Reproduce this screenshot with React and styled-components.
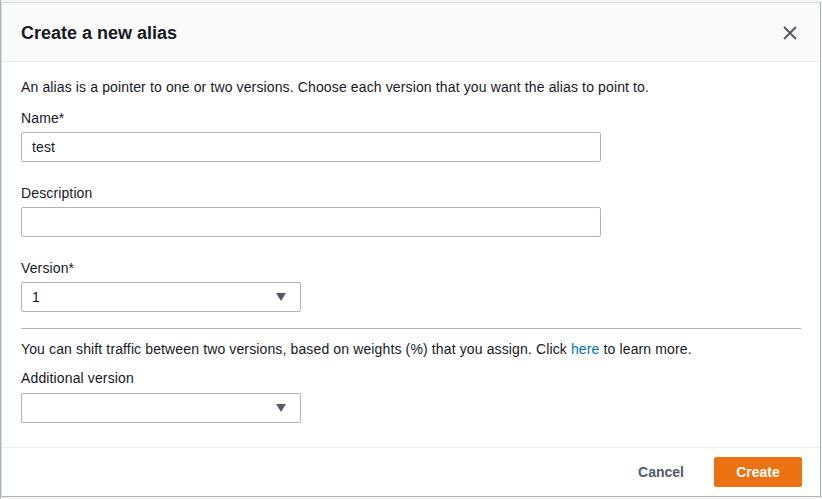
import React from "react";
import styled, { createGlobalStyle } from "styled-components";

const Global = createGlobalStyle`
  html, body { margin: 0; padding: 0; }
  body {
    background: #f2f3f3;
    font-family: "Liberation Sans", Arial, sans-serif;
    color: #16191f;
    width: 822px;
    height: 499px;
    overflow: hidden;
  }
`;

const Page = styled.div`
  padding: 2px 0 0 0;
  border-left: 1px solid #aab7b8;
  box-sizing: border-box;
  height: 499px;
  width: 822px;
`;

const Modal = styled.div`
  width: 820px;
  height: 495px;
  box-sizing: border-box;
  background: #fff;
  border: 1px solid #d5dbdb;
  border-right-color: #aab7b8;
  border-bottom-color: #aab7b8;
  display: flex;
  flex-direction: column;
`;

const Header = styled.div`
  height: 59px;
  box-sizing: border-box;
  background: #fafafa;
  border-bottom: 1px solid #eaeded;
  display: flex;
  align-items: center;
  justify-content: space-between;
  padding: 1px 20px 0 19px;
`;

const Title = styled.h2`
  margin: 0;
  font-size: 18px;
  font-weight: 700;
  line-height: 22px;
  color: #16191f;
`;

const CloseButton = styled.button`
  border: none;
  background: none;
  padding: 0;
  width: 20px;
  height: 20px;
  display: flex;
  align-items: center;
  justify-content: center;
  cursor: pointer;
`;

const Body = styled.div`
  flex: 1;
  padding: 14px 19px 0 19px;
  display: flex;
  flex-direction: column;
`;

const Text = styled.p`
  margin: 0;
  font-size: 14px;
  line-height: 22px;
  letter-spacing: 0.13px;
  color: #16191f;
`;

const Link = styled.a`
  color: #0073bb;
  text-decoration: none;
`;

const Field = styled.div`
  display: flex;
  flex-direction: column;
  margin-top: ${(p) => p.$top}px;
`;

const Label = styled.label`
  font-size: 14px;
  line-height: 22px;
  letter-spacing: 0.13px;
  color: #16191f;
  margin-bottom: ${(p) => p.$gap || 3}px;
`;

const Input = styled.input`
  box-sizing: border-box;
  width: ${(p) => p.$width}px;
  height: 30px;
  border: 1px solid #aab7b8;
  border-radius: 2px;
  padding: 0 10px;
  font-family: inherit;
  font-size: 14px;
  letter-spacing: 0.13px;
  color: #16191f;
  outline: none;
`;

const Select = styled.div`
  box-sizing: border-box;
  width: 280px;
  height: 30px;
  border: 1px solid #aab7b8;
  border-radius: 2px;
  padding: 0 14px 0 10px;
  display: flex;
  align-items: center;
  justify-content: space-between;
  font-size: 14px;
  color: #16191f;
`;

const Caret = styled.span`
  width: 0;
  height: 0;
  border-left: 5px solid transparent;
  border-right: 5px solid transparent;
  border-top: 8px solid #545b64;
`;

const Divider = styled.hr`
  margin: 16px 0 9px 0;
  border: none;
  border-top: 1px solid #aab7b8;
  width: 780px;
`;

const Footer = styled.div`
  height: 49px;
  box-sizing: border-box;
  border-top: 1px solid #eaeded;
  display: flex;
  align-items: center;
  justify-content: flex-end;
  gap: 9px;
  padding: 0 18px 0 20px;
`;

const Button = styled.button`
  height: 30px;
  box-sizing: border-box;
  padding: 0 20px;
  border-radius: 2px;
  font-family: inherit;
  font-size: 14px;
  font-weight: 700;
  cursor: pointer;
  border: 1px solid ${(p) => (p.$primary ? "#ec7211" : "transparent")};
  background: ${(p) => (p.$primary ? "#ec7211" : "transparent")};
  color: ${(p) => (p.$primary ? "#fff" : "#545b64")};
  min-width: ${(p) => (p.$primary ? "88px" : "auto")};
`;

export default function App() {
  return (
    <>
      <Global />
      <Page>
        <Modal>
          <Header>
            <Title>Create a new alias</Title>
            <CloseButton aria-label="Close">
              <svg width="14" height="14" viewBox="0 0 14 14">
                <path d="M1 1 L13 13 M13 1 L1 13" stroke="#545b64" strokeWidth="2" fill="none" />
              </svg>
            </CloseButton>
          </Header>
          <Body>
            <Text>
              An alias is a pointer to one or two versions. Choose each version that you want the alias to point to.
            </Text>
            <Field $top={9}>
              <Label>Name*</Label>
              <Input $width={580} defaultValue="test" />
            </Field>
            <Field $top={20}>
              <Label>Description</Label>
              <Input $width={580} />
            </Field>
            <Field $top={20}>
              <Label>Version*</Label>
              <Select>
                <span>1</span>
                <Caret />
              </Select>
            </Field>
            <Divider />
            <Text>
              You can shift traffic between two versions, based on weights (%) that you assign. Click{" "}
              <Link href="#">here</Link> to learn more.
            </Text>
            <Field $top={7}>
              <Label $gap={4}>Additional version</Label>
              <Select>
                <span></span>
                <Caret />
              </Select>
            </Field>
          </Body>
          <Footer>
            <Button>Cancel</Button>
            <Button $primary>Create</Button>
          </Footer>
        </Modal>
      </Page>
    </>
  );
}
